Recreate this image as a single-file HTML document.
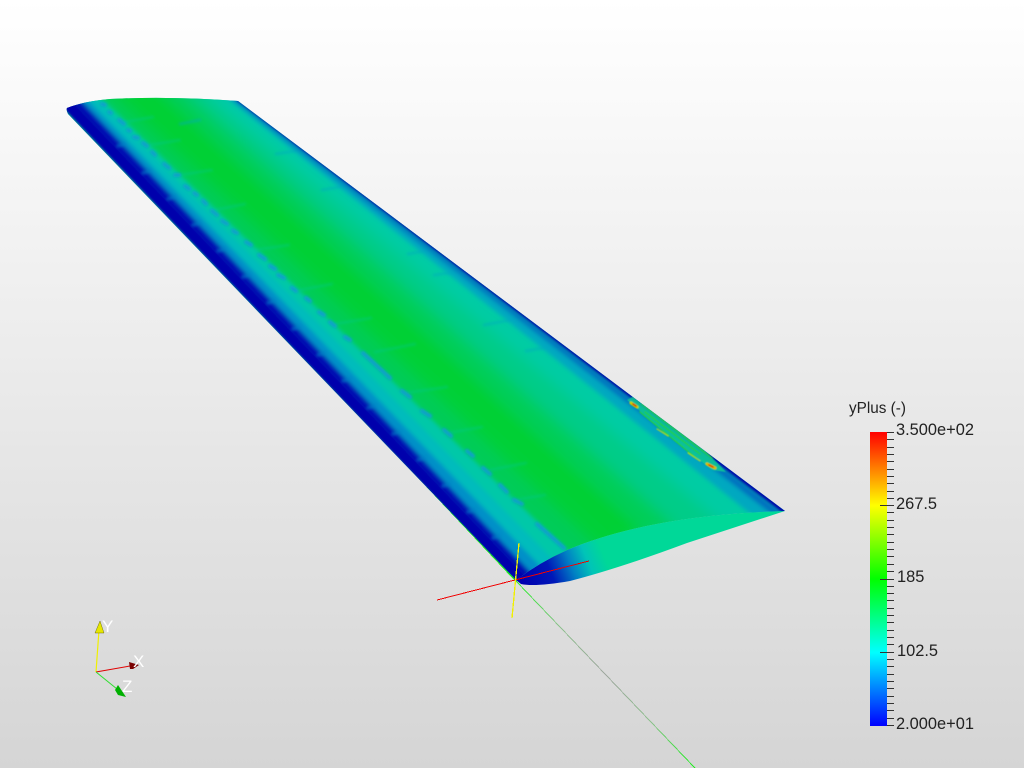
<!DOCTYPE html>
<html>
<head>
<meta charset="utf-8">
<style>
html,body{margin:0;padding:0;width:1024px;height:768px;overflow:hidden;background:#d6d6d6}
svg{display:block;position:absolute;left:0;top:0}
text{font-family:"Liberation Sans",sans-serif}
</style>
</head>
<body>
<svg width="1024" height="768" viewBox="0 0 1024 768" xmlns="http://www.w3.org/2000/svg">
<defs>
<linearGradient id="bg" x1="0" y1="0" x2="0" y2="1"><stop offset="0" stop-color="#ffffff"/><stop offset="1" stop-color="#d5d5d5"/></linearGradient>
<linearGradient id="cb" x1="0" y1="0" x2="0" y2="1">
<stop offset="0" stop-color="#ff0000"/><stop offset=".125" stop-color="#ff8000"/><stop offset=".25" stop-color="#ffff00"/>
<stop offset=".5" stop-color="#00ff00"/><stop offset=".75" stop-color="#00ffff"/><stop offset="1" stop-color="#0000ff"/>
</linearGradient>
<linearGradient id="root" gradientUnits="userSpaceOnUse" x1="524" y1="586" x2="603" y2="553">
<stop offset="0" stop-color="#0000b0"/><stop offset=".35" stop-color="#0018b8"/><stop offset=".6" stop-color="#0080c4"/><stop offset=".8" stop-color="#00c4b8"/><stop offset="1" stop-color="#00d898"/>
</linearGradient>
<linearGradient id="gl" gradientUnits="userSpaceOnUse" x1="516" y1="581" x2="695" y2="768">
<stop offset="0" stop-color="#30f030"/><stop offset=".25" stop-color="#90c090"/><stop offset=".5" stop-color="#a0a8a0"/><stop offset=".75" stop-color="#90c090"/><stop offset="1" stop-color="#20f020"/>
</linearGradient>
<clipPath id="wing"><path d="M67,108Q85,101 110,99Q170,96 238,101L785,511Q650,515 567,550Q540,562 516,580L68,114Q66,110 67,108Z"/></clipPath>
<filter id="b6" filterUnits="userSpaceOnUse" x="0" y="50" width="900" height="600"><feGaussianBlur stdDeviation="7"/></filter>
<filter id="b2" filterUnits="userSpaceOnUse" x="0" y="50" width="900" height="600"><feGaussianBlur stdDeviation="2.2"/></filter>
<filter id="b1" filterUnits="userSpaceOnUse" x="0" y="50" width="900" height="600"><feGaussianBlur stdDeviation="1.2"/></filter>
<filter id="b05" filterUnits="userSpaceOnUse" x="0" y="50" width="900" height="600"><feGaussianBlur stdDeviation=".6"/></filter>
</defs>
<rect width="1024" height="768" fill="url(#bg)"/>

<g shape-rendering="crispEdges" fill="none">
<path d="M340,394L516,581" stroke="#20f020" stroke-width="1.5"/>
<path d="M516,581L695,768" stroke="url(#gl)" stroke-width="1"/>
</g>

<path d="M785,511Q650,515 567,550Q540,562 516,580L521,584Q535,587 570,581Q620,568 687,543Z" fill="url(#root)"/>

<g clip-path="url(#wing)">
<rect x="40" y="80" width="780" height="520" fill="#00cc90"/>
<g filter="url(#b6)">
<polygon points="82,85 567,573 605,555 100,83" fill="#00cc58"/>
<polygon points="100,83 605,555 625,540 120,83" fill="#00d038"/>
<polygon points="120,83 625,540 645,534 150,84" fill="#00d030"/>
<polygon points="150,84 645,534 680,530 175,84" fill="#00ce58"/>
<polygon points="175,84 680,530 725,525 195,86" fill="#00cc88"/>
<polygon points="195,86 725,525 785,522 212,88" fill="#00cca4"/>
<polygon points="212,88 785,522 800,522 228,90" fill="#00c6b8"/>
</g>
<!-- streaks off the blue spots and near the trailing edge -->
<g filter="url(#b1)" fill="none" stroke-linecap="round">
<path stroke="#00c890" stroke-width="2.2" opacity=".45" d="M180,175l32,-5M215,210l30,-6M255,250l34,-5M300,290l32,-6M335,324l36,-6M375,352l40,-8M405,393l42,-6M448,433l34,-6M490,470l36,-7M515,500l30,-5M150,145l30,-5M125,122l28,-5"/>
<path stroke="#00a8c0" stroke-width="2.5" opacity=".5" d="M400,205l-28,5M440,248l-32,6M470,270l-36,5M520,318l-36,7M560,345l-34,6M200,120l-20,4M300,150l-24,4M350,185l-28,5"/>
</g>
<g filter="url(#b2)">
<polygon points="52,95 530,595 537,589 61,91" fill="#0000ac"/>
<polygon points="61,91 537,589 543,585 69,88" fill="#0010b4"/>
<polygon points="69,88 543,585 553,579 74,86" fill="#0090c8"/>
<polygon points="74,86 553,579 567,573 82,85" fill="#00bcbc"/>
<polygon points="82,85 567,573 582,565 87,85" fill="#00c8a8"/>
<polygon points="215,88 762,523 782,522 220,90" fill="#00a8c0"/>
<polygon points="220,90 782,522 795,522 224,90" fill="#0070c0"/>
</g>
<g filter="url(#b1)" fill="none" stroke="#0080c8" stroke-width="4" stroke-linecap="round" opacity=".5">
<path d="M118,146l6,-2M143,173l6,-2M168,199l6,-2M193,225l6,-2M218,251l6,-2M243,277l6,-2M268,303l6,-2M293,329l6,-2M318,355l6,-2M343,381l6,-2M368,408l6,-2M393,434l6,-2M418,460l6,-2M443,486l6,-2M468,512l6,-2M493,538l6,-2"/>
</g>
<g filter="url(#b1)">
<polygon points="52,95 530,595 536,590 60,91" fill="#0000ac"/>
<polygon points="223,90 795,522 803,522 227,90" fill="#0000ac"/>
</g>
<g filter="url(#b1)" fill="none" stroke="#10a0cc" stroke-width="4" stroke-linecap="round">
<path d="M102,104l3,1M109,112l2,1M119,120l5,4M128,130l2,1M134,137l4,1M143,143l4,3M152,152l3,3M164,164l5,4M175,175l4,0M185,186l4,3M194,193l3,2M203,201l3,3M212,211l5,4M222,221l5,3M233,231l4,2M246,242l5,3M259,255l6,4M270,266l5,3M278,275l6,3M292,288l4,3M306,298l4,3M319,312l5,3M330,322l5,4M345,337l5,3M363,353l27,25M402,391l8,6M422,411l8,5M444,430l7,6M467,451l6,5M483,468l7,6M500,485l7,7M514,500l8,4M537,524l27,24"/>
</g>
<g filter="url(#b05)" fill="none" stroke-linecap="round">
<path d="M627,400L660,428L712,470L726,472L700,445L660,415L634,396Z" fill="#14d090" stroke="none" opacity=".8"/>
<path d="M645,412L700,454M642,404L712,458M640,412L696,458" stroke="#22d040" stroke-width="1.3"/>
<path d="M631,403L637,407" stroke="#c8d000" stroke-width="3"/>
<path d="M633,404L636,406" stroke="#e02000" stroke-width="1.6"/>
<path d="M657,429L668,436M688,453L700,461" stroke="#a8d828" stroke-width="1.2"/>
<path d="M707,464L715,468" stroke="#d8c000" stroke-width="3"/>
<path d="M709,465L713,467" stroke="#e04000" stroke-width="1.6"/>
</g>
</g>

<g shape-rendering="crispEdges" fill="none" stroke-width="1">
<path d="M437,600L589,561" stroke="#f00000"/>
<path d="M519,543L512,618" stroke="#f0f000" stroke-width="1.3"/>
</g>

<!-- Axes widget -->
<g>
<path d="M96,672L99,630" stroke="#f0f000" stroke-width="1.2" fill="none"/>
<path d="M96,672L130,666" stroke="#e00000" stroke-width="1" fill="none"/>
<path d="M96,672L117,689" stroke="#30e030" stroke-width="1" fill="none"/>
<polygon points="100,621 95,633 104,633" fill="#e6e600" stroke="#555500" stroke-width=".4"/>
<polygon points="139,665 129,662 130,669 133,669" fill="#7a0000"/>
<polygon points="126,697 118,685 115,690 118,695" fill="#00b000"/>
<text x="102" y="632" font-size="17" fill="#ffffff">Y</text>
<text x="133" y="667" font-size="17" fill="#ffffff">X</text>
<text x="122" y="692" font-size="17" fill="#ffffff">Z</text>
</g>

<!-- Colour bar -->
<text x="849" y="413" font-size="15.3" fill="#222">yPlus (-)</text>
<rect x="870" y="432" width="17" height="294" fill="url(#cb)"/>
<path shape-rendering="crispEdges" stroke="#333" stroke-width="1" fill="none" d="M887,432.5h7M887,439.5h7M887,447.5h7M887,454.5h7M887,461.5h7M887,469.5h7M887,476.5h7M887,483.5h7M887,491.5h7M887,498.5h7M880,505.5h14M887,512.5h7M887,520.5h7M887,527.5h7M887,534.5h7M887,542.5h7M887,549.5h7M887,556.5h7M887,564.5h7M887,571.5h7M880,579.5h14M887,586.5h7M887,593.5h7M887,600.5h7M887,608.5h7M887,615.5h7M887,622.5h7M887,630.5h7M887,637.5h7M887,644.5h7M880,652.5h14M887,659.5h7M887,666.5h7M887,674.5h7M887,681.5h7M887,688.5h7M887,696.5h7M887,703.5h7M887,710.5h7M887,718.5h7M887,725.5h7"/>
<g font-size="16.4" fill="#222">
<text x="896" y="435">3.500e+02</text>
<text x="896" y="509">267.5</text>
<text x="897" y="582">185</text>
<text x="897" y="656">102.5</text>
<text x="896" y="729">2.000e+01</text>
</g>
</svg>
</body>
</html>
